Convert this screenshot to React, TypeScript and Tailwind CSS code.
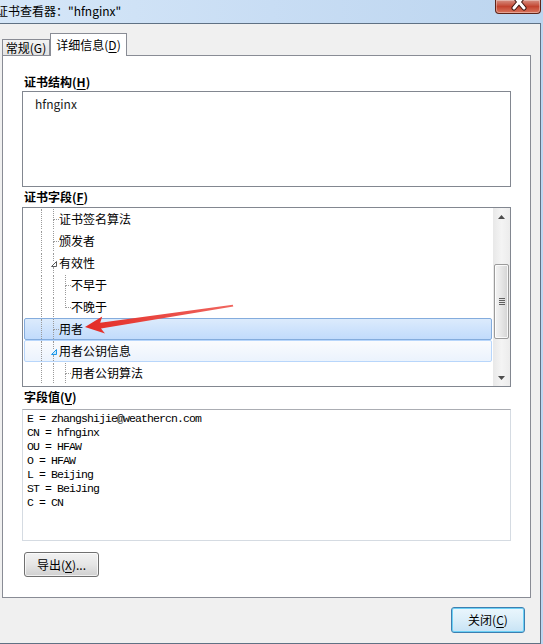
import React from "react";

type Guide = "full" | "top" | "none";

const rows: {
  label: string;
  guides: Guide[];
  last: "conn" | "connTop" | "expander" | "expanderHot";
  state?: "selected" | "hover";
}[] = [
  { label: "证书签名算法", guides: ["full"], last: "conn" },
  { label: "颁发者", guides: ["full"], last: "conn" },
  { label: "有效性", guides: ["full"], last: "expander" },
  { label: "不早于", guides: ["full", "full"], last: "conn" },
  { label: "不晚于", guides: ["full", "full"], last: "connTop" },
  { label: "用者", guides: ["full"], last: "conn", state: "selected" },
  { label: "用者公钥信息", guides: ["full"], last: "expanderHot", state: "hover" },
  { label: "用者公钥算法", guides: ["full", "full"], last: "conn" },
];

const values = [
  "E = zhangshijie@weathercn.com",
  "CN = hfnginx",
  "OU = HFAW",
  "O = HFAW",
  "L = Beijing",
  "ST = BeiJing",
  "C = CN",
];

function GuideCell({ kind }: { kind: Guide }) {
  return (
    <span className="flex h-full w-[12px] pl-[6px]">
      {kind !== "none" && <span className="h-full border-l border-dotted border-[#9a9a9a]" />}
    </span>
  );
}

function LastCell({ kind }: { kind: "conn" | "connTop" | "expander" | "expanderHot" }) {
  if (kind === "expander" || kind === "expanderHot") {
    const hot = kind === "expanderHot";
    return (
      <span className="flex h-full w-[12px] flex-col pl-[6px]">
        <span className="h-[8px] border-l border-dotted border-[#9a9a9a]" />
        <span className="-ml-[2px] flex h-[6px] items-center">
          <svg width="7" height="6" viewBox="0 0 7 6">
            <path
              d="M5.5 0.5 L5.5 5.5 L0.5 5.5 Z"
              fill={hot ? "#bfe6fb" : "#ffffff"}
              stroke={hot ? "#1c97ea" : "#5a5a5a"}
              strokeWidth="1"
            />
          </svg>
        </span>
        <span className="flex-1 border-l border-dotted border-[#9a9a9a]" />
      </span>
    );
  }
  return (
    <span className="flex h-full w-[12px] flex-col pl-[6px]">
      <span className="h-[11px] w-[6px] border-b border-l border-dotted border-[#9a9a9a]" />
      {kind === "conn" && <span className="flex-1 border-l border-dotted border-[#9a9a9a]" />}
    </span>
  );
}

function Mn({ children }: { children: React.ReactNode }) {
  return <span className="underline underline-offset-2">{children}</span>;
}

export default function App() {
  const ui = "font-['Microsoft_YaHei','Noto_Sans_CJK_SC',sans-serif]";
  return (
    <div className={`w-[543px] h-[644px] overflow-hidden bg-[#bdd6f0] text-[12px] text-black ${ui}`}>
      {/* Title bar */}
      <div className="flex h-[23px] items-start justify-between bg-gradient-to-r from-[#d6e7f8] via-[#c8ddf4] to-[#bcd5ef]">
        <div className="-ml-[4px] mt-[3px] text-[12px] leading-[16px] text-black">证书查看器："hfnginx"</div>
        <div className="mr-[2px] h-[14px] w-[46px] overflow-hidden rounded-b-[4px] border border-t-0 border-[#5e2419] bg-gradient-to-b from-[#d58f83] via-[#c2432f] to-[#d9755e] shadow-[inset_0_0_0_1px_rgba(255,255,255,0.35)]">
          <svg width="46" height="14" viewBox="0 0 46 14">
            <path d="M18 -4 L28 8 M28 -4 L18 8" stroke="#3b1510" strokeWidth="5" strokeLinecap="round" />
            <path d="M18 -4 L28 8 M28 -4 L18 8" stroke="#ffffff" strokeWidth="3" strokeLinecap="round" />
          </svg>
        </div>
      </div>

      {/* Window body */}
      <div className="flex h-[621px] w-[541px] flex-col border-y border-r border-[#5f7184] bg-[#f0f0f0]">
        {/* Tabs */}
        <div className="flex h-[31px] items-end pl-[2px]">
          <div className="flex h-[16px] w-[48px] items-center justify-center border border-b-0 border-[#898c95] bg-gradient-to-b from-[#f3f3f3] to-[#e3e3e3] leading-[14px]">
            常规(<Mn>G</Mn>)
          </div>
          <div className="relative z-10 -mb-px flex h-[23px] w-[77px] items-center justify-center border border-b-0 border-[#898c95] bg-white pb-[1px] leading-[16px]">
            详细信息(<Mn>D</Mn>)
          </div>
        </div>

        {/* Tab panel */}
        <div className="ml-[2px] flex h-[543px] w-[529px] flex-col border border-[#898c95] bg-white px-[19px] pt-[18px]">
          <div className="pl-[2px] font-bold leading-[16px]">
            证书结构(<Mn>H</Mn>)
          </div>
          <div className="mt-[1px] h-[96px] border border-[#828790] pl-[12px] pt-[4px] leading-[16px] text-[#1a1a1a]">
            hfnginx
          </div>

          <div className="mt-[2px] pl-[2px] font-bold leading-[16px]">
            证书字段(<Mn>F</Mn>)
          </div>
          <div className="relative mt-[2px] flex h-[180px] border border-[#828790]">
            <div className="flex flex-1 flex-col">
              {rows.map((r) => (
                <div
                  key={r.label}
                  className={`mx-[1px] flex h-[22px] items-center rounded-[2px] border pl-[10px] ${
                    r.state === "selected"
                      ? "border-[#84acdd] bg-gradient-to-b from-[#dcebfc] to-[#c1dbfc]"
                      : r.state === "hover"
                      ? "border-[#b8d6fb] bg-gradient-to-b from-[#fafbfd] to-[#ebf3fd]"
                      : "border-transparent"
                  }`}
                >
                  <GuideCell kind="full" />
                  {r.guides.slice(1).map((g, i) => (
                    <GuideCell key={i} kind={g} />
                  ))}
                  <LastCell kind={r.last} />
                  <span className="leading-[16px]">{r.label}</span>
                </div>
              ))}
            </div>

            {/* Scrollbar */}
            <div className="flex w-[17px] flex-col bg-gradient-to-r from-[#e8e8e8] via-[#f4f4f4] to-[#ececec]">
              <div className="flex h-[17px] items-center justify-center">
                <svg width="7" height="4" viewBox="0 0 7 4">
                  <path d="M3.5 0 L7 4 L0 4 Z" fill="#4d4d4d" />
                </svg>
              </div>
              <div className="ml-[1px] mt-[39px] flex h-[75px] w-[15px] items-center justify-center rounded-[2px] border border-[#9b9b9b] bg-gradient-to-r from-[#f4f4f4] via-[#e6e6e6] to-[#d4d4d4] shadow-[inset_0_0_0_1px_rgba(255,255,255,0.8)]">
                <div className="flex flex-col gap-[1px]">
                  <span className="h-px w-[6px] bg-[#606060]" />
                  <span className="h-px w-[6px] bg-[#606060]" />
                  <span className="h-px w-[6px] bg-[#606060]" />
                  <span className="h-px w-[6px] bg-[#606060]" />
                </div>
              </div>
              <div className="flex-1" />
              <div className="flex h-[17px] items-center justify-center">
                <svg width="7" height="4" viewBox="0 0 7 4">
                  <path d="M0 0 L7 0 L3.5 4 Z" fill="#4d4d4d" />
                </svg>
              </div>
            </div>

            {/* Annotation arrow */}
            <svg
              className="pointer-events-none absolute left-0 top-0"
              width="487"
              height="178"
              viewBox="0 0 487 178"
            >
              <defs>
                <linearGradient id="arr" x1="0" y1="0" x2="1" y2="0">
                  <stop offset="0" stopColor="#e32b25" />
                  <stop offset="1" stopColor="#f0665f" />
                </linearGradient>
              </defs>
              <polygon
                points="62,119 82,125.5 78,120.5 210.3,98.6 209.8,96.8 77.2,114.8 79.2,108.4"
                fill="url(#arr)"
              />
            </svg>
          </div>

          <div className="mt-[2px] pl-[2px] font-bold leading-[16px]">
            字段值(<Mn>V</Mn>)
          </div>
          <div className="mt-[4px] h-[132px] border border-[#d5dbe2] border-t-[#abadb3] pl-[4px] pt-[2px] font-['Liberation_Mono',monospace] text-[11.5px] leading-[14px] tracking-[-0.9px] text-black">
            {values.map((v) => (
              <div key={v} className="whitespace-pre">
                {v}
              </div>
            ))}
          </div>

          <div className="ml-[2px] mt-[11px] flex h-[25px] w-[75px] items-center justify-center rounded-[3px] border border-[#707070] bg-gradient-to-b from-[#f2f2f2] via-[#e6e6e6] to-[#d0d0d0] shadow-[inset_0_0_0_1px_rgba(255,255,255,0.7)]">
            导出(<Mn>X</Mn>)...
          </div>
        </div>

        {/* Bottom buttons */}
        <div className="flex justify-end pr-[15px] pt-[9px]">
          <div className="flex h-[26px] w-[74px] items-center justify-center rounded-[3px] border border-[#3c7fb1] bg-gradient-to-b from-[#eaf6fd] via-[#dbeef9] to-[#c7e3f5] shadow-[inset_0_0_0_1px_#6cd0f5]">
            关闭(<Mn>C</Mn>)
          </div>
        </div>
      </div>
    </div>
  );
}
